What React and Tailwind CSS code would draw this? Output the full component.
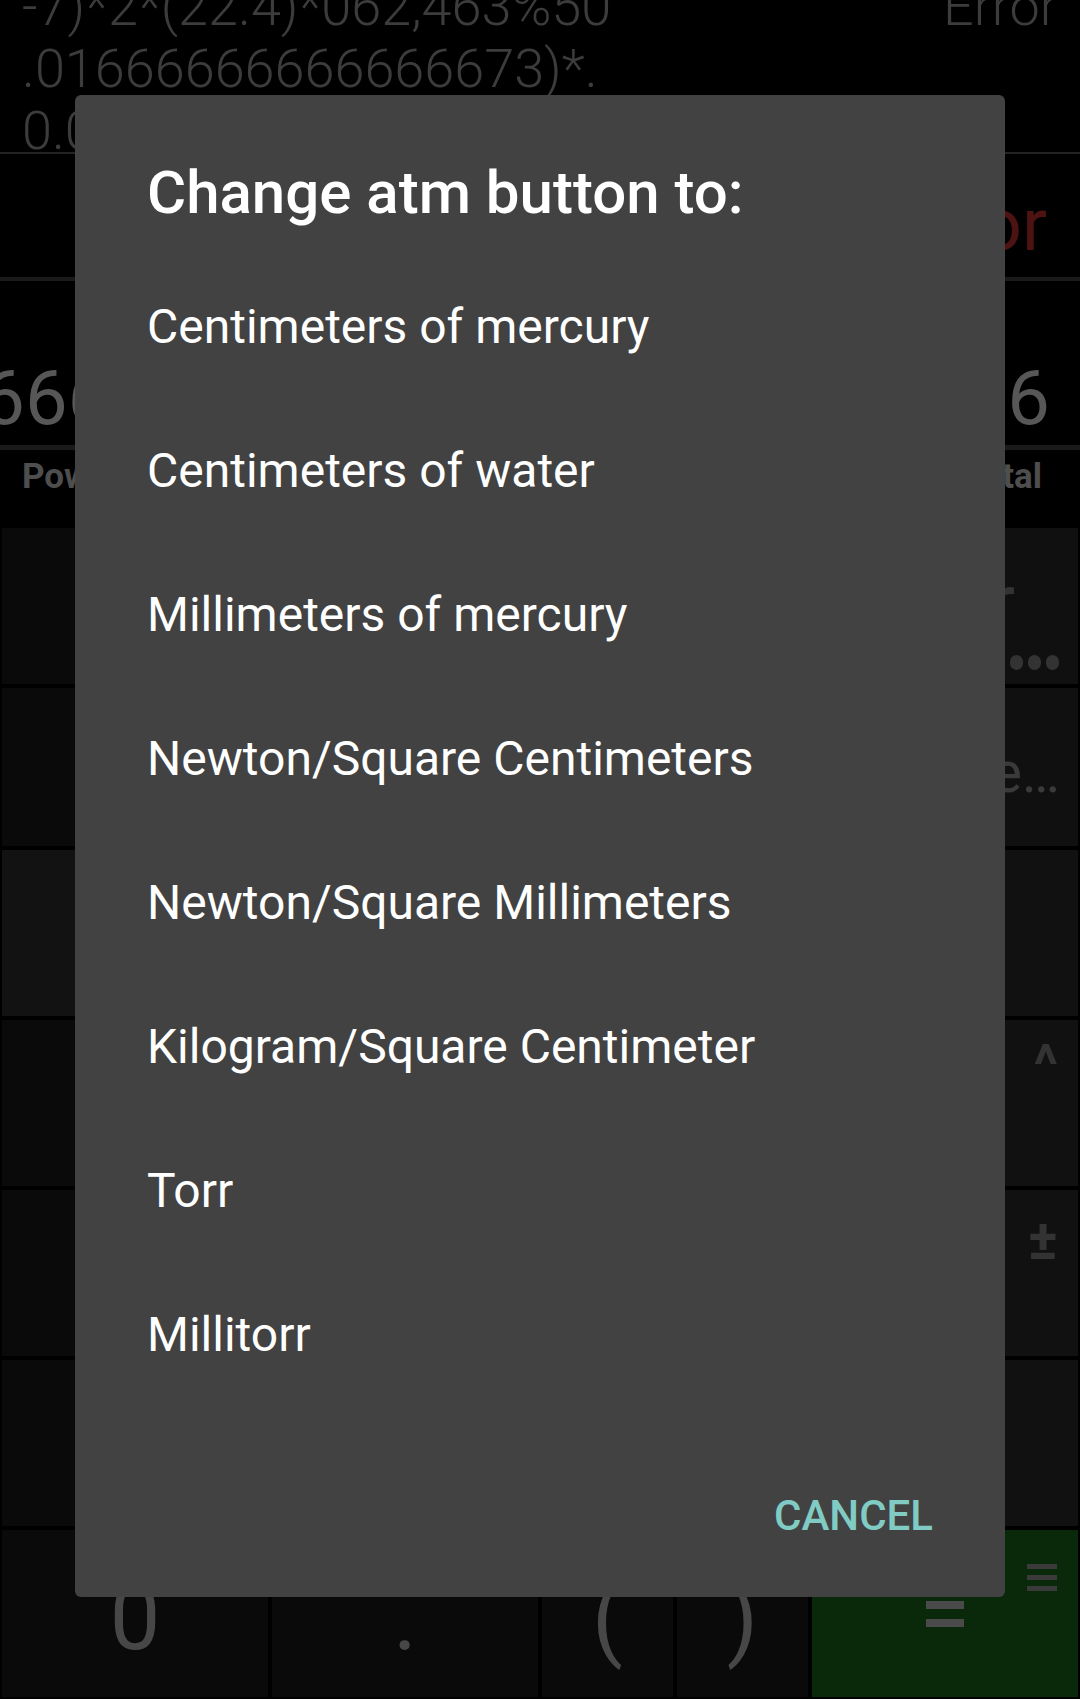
import React from "react";

const units = [
  "Centimeters of mercury",
  "Centimeters of water",
  "Millimeters of mercury",
  "Newton/Square Centimeters",
  "Newton/Square Millimeters",
  "Kilogram/Square Centimeter",
  "Torr",
  "Millitorr",
];

function Key({ className = "", children }) {
  return <div className={`relative flex items-center justify-center overflow-hidden ${className}`}>{children}</div>;
}

function SmallLabel({ children, className = "" }) {
  return (
    <div className={`absolute right-[20px] text-[#333333] font-bold leading-none ${className}`}>{children}</div>
  );
}

export default function App() {
  return (
    <div className="relative w-[1080px] h-[1699px] overflow-hidden bg-black font-['Roboto',sans-serif]">
      {/* Calculator behind the dialog */}
      <div className="flex flex-col h-full">
        {/* Expression */}
        <div className="h-[152px] overflow-hidden">
          <div className="-mt-[24px] px-[22px] text-[54px] leading-[62px] font-light text-[#3c3c3c] whitespace-nowrap">
            <div className="flex justify-between">
              <span>-7)*2*(22.4)*062,463%50</span>
              <span>Error</span>
            </div>
            <div>.01666666666666673)*.</div>
            <div>0.05</div>
          </div>
        </div>
        <div className="h-[2px] bg-[#232323]" />

        {/* Result error */}
        <div className="h-[123px] flex justify-end pt-[28px] pr-[33px] text-[74px] leading-[86px] text-[#4d1313] whitespace-nowrap">
          Error
        </div>
        <div className="h-[4px] bg-[#1a1a1a]" />

        {/* Converted value */}
        <div className="h-[164px] flex justify-end overflow-hidden pt-[73px] pr-[30px] text-[76px] leading-[89px] text-[#575757] whitespace-nowrap">
          66666666666666
          <span className="inline-block w-[33px]" />
          66666666666636
        </div>
        <div className="h-[5px] bg-[#1a1a1a]" />

        {/* Labels */}
        <div className="h-[77px] flex justify-between pt-[6px] pl-[22px] pr-[38px] text-[35px] leading-[41px] font-bold text-[#4e4e4e]">
          <span>Power</span>
          <span>Total</span>
        </div>

        {/* Keypad */}
        <div className="flex flex-col gap-[4px] pt-[1px] px-[2px] text-[#474747]">
          <div className="h-[156px] grid grid-cols-4 gap-[4px]">
            <Key className="bg-[#0a0a0a] items-end pb-[26px] text-[42px] text-[#3a3a3a]">MODE</Key>
            <Key className="bg-[#0a0a0a]" />
            <Key className="bg-[#0a0a0a]" />
            <Key className="bg-[#101010] flex-col items-end pr-[63px] text-[#333333]">
              <span className="text-[80px] leading-[94px] mt-[-6px]">Clear</span>
              <div className="absolute left-[198px] top-[127px] flex gap-[5px]">
                <span className="w-[13px] h-[15px] rounded-full bg-[#333333]" />
                <span className="w-[13px] h-[15px] rounded-full bg-[#333333]" />
                <span className="w-[13px] h-[15px] rounded-full bg-[#333333]" />
              </div>
            </Key>
          </div>

          <div className="h-[158px] grid grid-cols-4 gap-[4px]">
            <Key className="bg-[#0a0a0a] items-end pb-[27px] text-[42px] text-[#3a3a3a]">MENU</Key>
            <Key className="bg-[#0a0a0a]" />
            <Key className="bg-[#0a0a0a]" />
            <Key className="bg-[#101010] justify-end pr-[18px] pt-[12px] text-[57px] text-[#3a3a3a]">Precise…</Key>
          </div>

          <div className="h-[166px] grid grid-cols-4 gap-[4px]">
            <Key className="bg-[#121212]" />
            <Key className="bg-[#121212]" />
            <Key className="bg-[#121212]" />
            <Key className="bg-[#111111]" />
          </div>

          <div className="h-[166px] grid grid-cols-4 gap-[4px]">
            <Key className="bg-[#0a0a0a]" />
            <Key className="bg-[#0a0a0a]" />
            <Key className="bg-[#0a0a0a]" />
            <Key className="bg-[#111111]">
              <SmallLabel className="top-[17px] text-[56px] text-[#2c2c2c]">^</SmallLabel>
            </Key>
          </div>

          <div className="h-[166px] grid grid-cols-4 gap-[4px]">
            <Key className="bg-[#0a0a0a]" />
            <Key className="bg-[#0a0a0a]" />
            <Key className="bg-[#0a0a0a]" />
            <Key className="bg-[#111111]">
              <SmallLabel className="top-[22px] text-[56px]">±</SmallLabel>
            </Key>
          </div>

          <div className="h-[166px] grid grid-cols-4 gap-[4px]">
            <Key className="bg-[#0a0a0a]" />
            <Key className="bg-[#0a0a0a]" />
            <Key className="bg-[#0a0a0a]" />
            <Key className="bg-[#111111]" />
          </div>

          <div className="h-[167px] grid grid-cols-4 gap-[4px] text-[90px]">
            <Key className="bg-[#0a0a0a] pt-[10px]">0</Key>
            <Key className="bg-[#0a0a0a] pt-[10px]">.</Key>
            <div className="grid grid-cols-2 gap-[4px]">
              <Key className="bg-[#0a0a0a] pt-[10px]">(</Key>
              <Key className="bg-[#0a0a0a] pt-[10px]">)</Key>
            </div>
            <Key className="bg-[#0a290b] flex-col gap-[10px]">
              <span className="w-[38px] h-[8px] bg-[#4a4a4a]" />
              <span className="w-[38px] h-[8px] bg-[#4a4a4a]" />
              <div className="absolute right-[21px] top-[34px] flex flex-col gap-[6px]">
                <span className="w-[30px] h-[5px] bg-[#3a3a3a]" />
                <span className="w-[30px] h-[5px] bg-[#3a3a3a]" />
                <span className="w-[30px] h-[5px] bg-[#3a3a3a]" />
              </div>
            </Key>
          </div>
        </div>
      </div>

      {/* Dialog */}
      <div className="absolute left-[75px] top-[95px] w-[930px] h-[1502px] rounded-[6px] bg-[#424242] flex flex-col">
        <div className="pt-[63px] px-[72px] text-[60px] leading-[70px] font-medium text-white">
          Change atm button to:
        </div>
        <div className="mt-[27px] flex flex-col">
          {units.map((u) => (
            <div key={u} className="h-[144px] flex items-center px-[72px] text-[48px] text-white">
              {u}
            </div>
          ))}
        </div>
        <div className="mt-[84px] flex justify-end pr-[72px]">
          <span className="text-[42px] leading-[49px] font-medium text-[#80cbc4]">CANCEL</span>
        </div>
      </div>
    </div>
  );
}
